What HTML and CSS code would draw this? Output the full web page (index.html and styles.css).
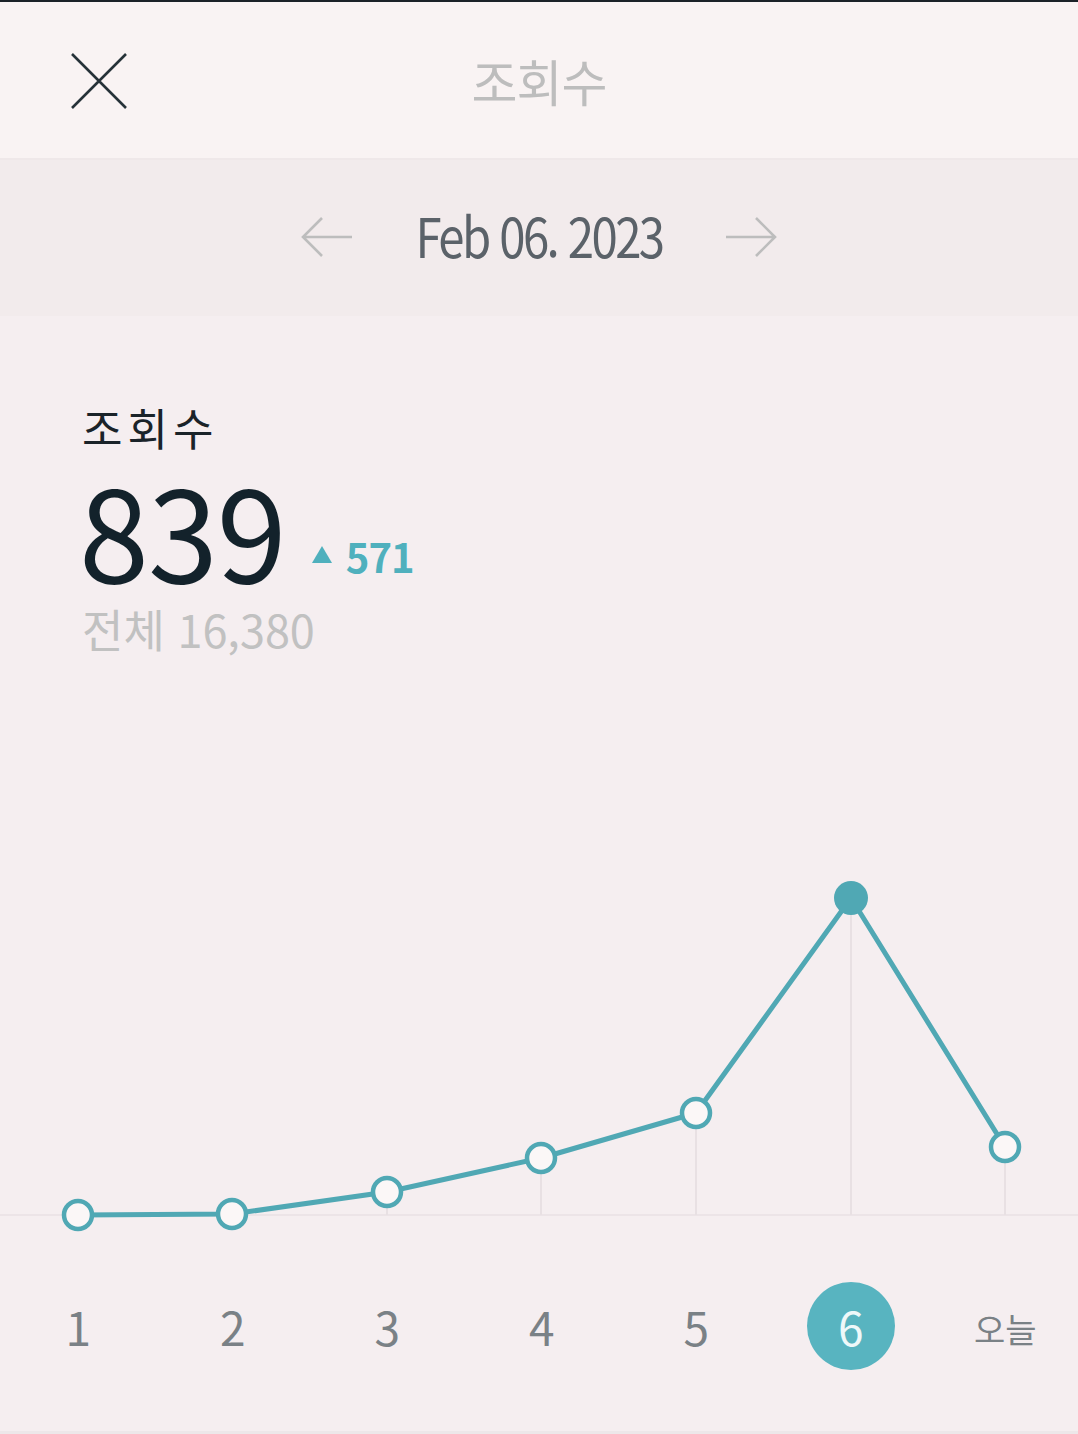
FILE: index.html
```html
<!DOCTYPE html>
<html lang="ko">
<head>
    <meta charset="UTF-8">
    <meta name="viewport" content="width=device-width, initial-scale=1.0">
    <title>조회수</title>
    <link rel="stylesheet" href="styles.css">
</head>
<body>
    <div class="topline"></div>
    <header class="header">
        <button class="close" type="button" aria-label="닫기">
            <svg width="56" height="56" viewBox="0 0 56 56">
                <path d="M1 1 L55 55 M55 1 L1 55" stroke="#263238" stroke-width="2.6" fill="none"/>
            </svg>
        </button>
        <h1 class="title">조회수</h1>
        <div></div>
    </header>

    <div class="datebar">
        <svg class="arrow" width="52" height="42" viewBox="0 0 52 42">
            <path d="M51 20 L2 20 M21 1 L2 20 L21 39" stroke="#bdbdbd" stroke-width="2.6" fill="none"/>
        </svg>
        <span class="date">Feb 06. 2023</span>
        <svg class="arrow" width="52" height="42" viewBox="0 0 52 42">
            <path d="M1 20 L50 20 M31 1 L50 20 L31 39" stroke="#bdbdbd" stroke-width="2.6" fill="none"/>
        </svg>
    </div>

    <section class="stats">
        <div class="label">조회수</div>
        <div class="count-row">
            <span class="count">839</span>
            <span class="delta"><span class="tri"></span>571</span>
        </div>
        <div class="total">전체 16,380</div>
    </section>

    <div class="chart">
        <svg width="1078" height="400" viewBox="0 0 1078 400">
            <line x1="0" y1="375" x2="1078" y2="375" stroke="#ece4e7" stroke-width="2"/>
            <g stroke="#e8e0e3" stroke-width="2">
                <line x1="387" y1="352" x2="387" y2="375"/>
                <line x1="541" y1="318" x2="541" y2="375"/>
                <line x1="696" y1="273" x2="696" y2="375"/>
                <line x1="851" y1="58" x2="851" y2="375"/>
                <line x1="1005" y1="307" x2="1005" y2="375"/>
            </g>
            <polyline points="78,375 232,374 387,352 541,318 696,273 851,58 1005,307" fill="none" stroke="#50a8b4" stroke-width="5" stroke-linejoin="round"/>
            <g fill="#fbf7f7" stroke="#50a8b4" stroke-width="4.5">
                <circle cx="78" cy="375" r="14"/>
                <circle cx="232" cy="374" r="14"/>
                <circle cx="387" cy="352" r="14"/>
                <circle cx="541" cy="318" r="14"/>
                <circle cx="696" cy="273" r="14"/>
                <circle cx="1005" cy="307" r="14"/>
            </g>
            <circle cx="851" cy="58" r="17" fill="#50a8b4"/>
        </svg>
    </div>

    <nav class="days">
        <span class="day">1</span>
        <span class="day">2</span>
        <span class="day">3</span>
        <span class="day">4</span>
        <span class="day">5</span>
        <span class="day active">6</span>
        <span class="day today">오늘</span>
    </nav>
</body>
</html>
```

FILE: styles.css
```css
body {
    margin: 0;
    width: 1078px;
    height: 1434px;
    overflow: hidden;
    background-color: #f5eef0;
    font-family: "Noto Sans CJK KR", "Noto Sans", sans-serif;
    display: flex;
    flex-direction: column;
}

.topline {
    height: 2px;
    background-color: #1b2228;
}

.header {
    height: 156px;
    background-color: #f9f3f3;
    border-bottom: 2px solid #efe8e9;
    display: grid;
    grid-template-columns: 1fr auto 1fr;
    align-items: center;
}

.close {
    background: none;
    border: none;
    padding: 0 0 0 71px;
    margin-top: 2px;
    justify-self: start;
    display: flex;
}

.title {
    margin: 0;
    font-size: 50px;
    font-weight: 400;
    color: #bdbdbd;
    letter-spacing: -1px;
}

.datebar {
    height: 156px;
    background-color: #f2ebec;
    display: flex;
    justify-content: center;
    align-items: center;
}

.arrow {
    display: block;
}

.date {
    width: 372px;
    padding-bottom: 8px;
    text-align: center;
    font-size: 55px;
    color: #5b6269;
    letter-spacing: -3px;
    transform: scaleX(0.86);
}

.stats {
    padding: 81px 82px 0;
}

.label {
    font-size: 44px;
    line-height: 60px;
    font-weight: 400;
    color: #1a2329;
    letter-spacing: 5px;
}

.count-row {
    display: flex;
    align-items: flex-start;
    margin-top: 6px;
    height: 130px;
}

.count {
    font-size: 126px;
    line-height: 130px;
    font-weight: 400;
    color: #13222b;
    letter-spacing: -1px;
    margin-left: -3px;
}

.delta {
    margin: 69px 0 0 26px;
    font-size: 40px;
    line-height: 48px;
    font-weight: 700;
    color: #4fb0bd;
    letter-spacing: -1px;
    display: flex;
    align-items: center;
}

.tri {
    width: 0;
    height: 0;
    border-left: 10px solid transparent;
    border-right: 10px solid transparent;
    border-bottom: 17px solid #4fb0bd;
    margin: -4px 14px 0 0;
}

.total {
    margin-top: 8px;
    font-size: 45px;
    line-height: 56px;
    color: #c1c1c1;
}

.chart {
    margin-top: auto;
}

.chart svg {
    display: block;
}

.days {
    height: 194px;
    box-sizing: border-box;
    padding: 42px 0 0 1px;
    border-bottom: 3px solid #ede7e9;
    display: grid;
    grid-template-columns: repeat(7, 154.5px);
    align-items: start;
}

.day {
    justify-self: center;
    width: 88px;
    height: 88px;
    border-radius: 50%;
    display: flex;
    justify-content: center;
    align-items: center;
    font-size: 46px;
    color: #7a8186;
}

.day.active {
    background-color: #58b4c0;
    color: #eef8f9;
}

.day.today {
    font-size: 34px;
    padding-top: 4px;
    box-sizing: border-box;
}
```
